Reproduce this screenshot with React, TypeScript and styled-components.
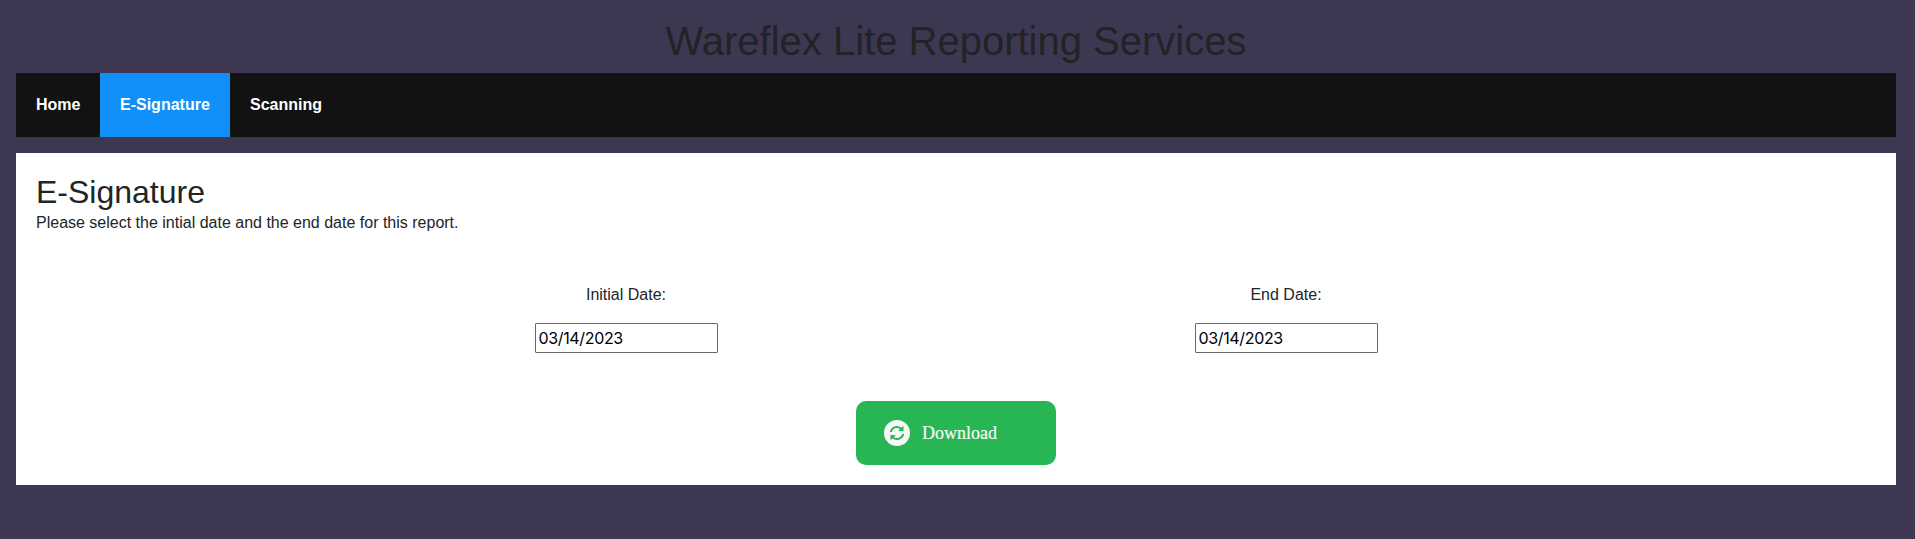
import React from "react";
import styled, { createGlobalStyle } from "styled-components";

const GlobalStyle = createGlobalStyle`
  *, *::before, *::after { box-sizing: border-box; }
  body {
    margin: 0;
    background: #3e3751;
    color: #212529;
    font: 400 16px/24px "Liberation Sans", Arial, sans-serif;
  }
`;

const Page = styled.div`
  height: 539px;
  padding: 17px 19px 0 16px;
`;

const Title = styled.h1`
  margin: 0 0 8px;
  color: #1f2427;
  font-size: 40px;
  font-weight: 400;
  line-height: 48px;
  text-align: center;
`;

const NavBar = styled.nav`
  display: flex;
  height: 64px;
  background: #121212;
`;

const NavItem = styled.a<{ $active?: boolean; $width: number }>`
  display: flex;
  align-items: center;
  width: ${(p) => p.$width}px;
  padding: 0 0 1px 20px;
  background: ${(p) => (p.$active ? "#1190fa" : "transparent")};
  color: #fff;
  font-weight: 700;
  white-space: nowrap;
  text-decoration: none;
`;

const Panel = styled.main`
  height: 332px;
  margin-top: 16px;
  padding: 20px;
  background: #fff;
`;

const Heading = styled.h2`
  margin: 0;
  font-size: 32px;
  font-weight: 400;
  line-height: 38px;
`;

const Intro = styled.p`
  margin: 0;
`;

const DateRow = styled.div`
  display: flex;
  justify-content: center;
  gap: 477px;
  margin-top: 48px;
`;

const Field = styled.label`
  display: flex;
  flex-direction: column;
  align-items: center;
  gap: 16px;
  width: 183px;
`;

const DateInput = styled.input`
  width: 183px;
  height: 30px;
  padding: 1px 2px 1px 3px;
  border: 1px solid #696969;
  border-radius: 1px;
  background: #fff;
  color: #000;
  font: 400 16px/24px Inter, sans-serif;
  letter-spacing: -0.35px;
`;

const DownloadButton = styled.button`
  display: flex;
  align-items: center;
  gap: 12px;
  width: 200px;
  height: 64px;
  margin: 48px auto 0;
  padding: 0 28px;
  border: 0;
  border-radius: 10px;
  background: #28b655;
  color: #f8f8f8;
  font: 400 18px/24px "Liberation Serif", "Times New Roman", serif;
  -webkit-text-stroke: 0.2px #f8f8f8;
`;

const RefreshIcon = () => (
  <svg width="26" height="26" viewBox="0 0 26 26" aria-hidden="true">
    <circle cx="13" cy="13" r="13" fill="#f8f8f8" />
    <g fill="none" stroke="#28b655" strokeWidth="1.9">
      <path d="M6.7 12C8 6.8 14 5.2 17.9 9.2" />
      <path d="M19.3 14C18 19.2 12 20.8 8.1 16.8" />
    </g>
    <path d="M19.5 5.8V11.2L14.1 10.7Z" fill="#28b655" />
    <path d="M6.5 20.2V14.8L11.9 15.3Z" fill="#28b655" />
  </svg>
);

const navItems = [
  { label: "Home", width: 84 },
  { label: "E-Signature", width: 130, active: true },
  { label: "Scanning", width: 112 },
];

export default function App() {
  return (
    <Page>
      <GlobalStyle />
      <Title>Wareflex Lite Reporting Services</Title>
      <NavBar>
        {navItems.map((item) => (
          <NavItem key={item.label} $width={item.width} $active={item.active}>
            {item.label}
          </NavItem>
        ))}
      </NavBar>
      <Panel>
        <Heading>E-Signature</Heading>
        <Intro>Please select the intial date and the end date for this report.</Intro>
        <DateRow>
          <Field>
            Initial Date:
            <DateInput type="text" defaultValue="03/14/2023" />
          </Field>
          <Field>
            End Date:
            <DateInput type="text" defaultValue="03/14/2023" />
          </Field>
        </DateRow>
        <DownloadButton type="button">
          <RefreshIcon />
          Download
        </DownloadButton>
      </Panel>
    </Page>
  );
}
